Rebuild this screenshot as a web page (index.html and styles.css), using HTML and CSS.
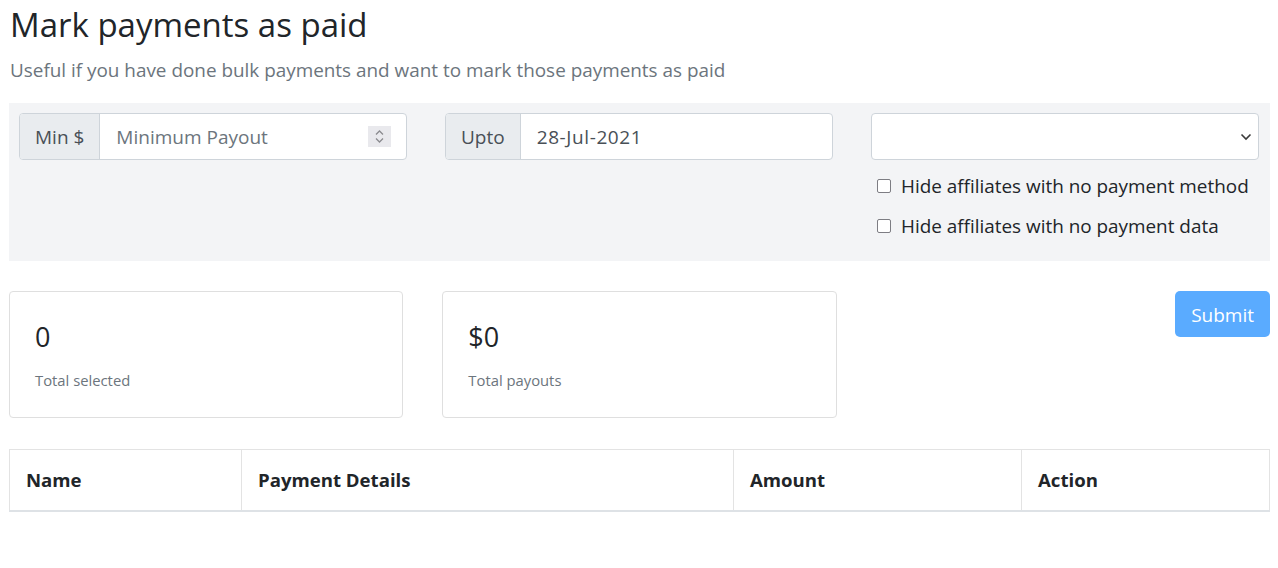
FILE: index.html
```html
<!DOCTYPE html>
<html lang="en">
<head>
<meta charset="utf-8">
<title>Mark payments as paid</title>
<link rel="stylesheet" href="styles.css">
</head>
<body>
<div class="page">
  <h1 class="title">Mark payments as paid</h1>
  <p class="subtitle">Useful if you have done bulk payments and want to mark those payments as paid</p>

  <div class="filters">
    <div class="filter-col">
      <div class="input-group">
        <span class="addon">Min $</span>
        <div class="field">
          <span class="placeholder">Minimum Payout</span>
          <span class="spinner">
            <svg width="11" height="15" viewBox="0 0 11 15"><path d="M2 5.5 L5.5 2 L9 5.5" fill="none" stroke="#8b8b8f" stroke-width="1.3"/><path d="M2 9.5 L5.5 13 L9 9.5" fill="none" stroke="#8b8b8f" stroke-width="1.3"/></svg>
          </span>
        </div>
      </div>
    </div>
    <div class="filter-col">
      <div class="input-group">
        <span class="addon">Upto</span>
        <div class="field"><span class="value">28-Jul-2021</span></div>
      </div>
    </div>
    <div class="filter-col">
      <div class="select">
        <svg width="12" height="8" viewBox="0 0 12 8"><path d="M1.5 1.5 L6 6 L10.5 1.5" fill="none" stroke="#3a3a3a" stroke-width="1.6"/></svg>
      </div>
      <div class="checks">
        <label class="check"><input type="checkbox"><span>Hide affiliates with no payment method</span></label>
        <label class="check"><input type="checkbox"><span>Hide affiliates with no payment data</span></label>
      </div>
    </div>
  </div>

  <div class="summary">
    <div class="card">
      <div class="card-num">0</div>
      <div class="card-label">Total selected</div>
    </div>
    <div class="card">
      <div class="card-num">$0</div>
      <div class="card-label">Total payouts</div>
    </div>
    <div class="actions">
      <button class="btn-submit" disabled>Submit</button>
    </div>
  </div>

  <table class="table">
    <thead>
      <tr>
        <th class="c-name">Name</th>
        <th class="c-details">Payment Details</th>
        <th class="c-amount">Amount</th>
        <th class="c-action">Action</th>
      </tr>
    </thead>
  </table>
</div>
</body>
</html>
```

FILE: styles.css
```css
* { box-sizing: border-box; }

html, body {
  margin: 0;
  padding: 0;
  background: #fff;
}

body {
  font-family: "Open Sans", "Noto Sans", "Liberation Sans", sans-serif;
  color: #212529;
}

.page {
  padding: 0 8px 0 9px;
}

.title {
  margin: 3px 0 0 1px;
  font-size: 33px;
  font-weight: 400;
  line-height: 43px;
  color: #212529;
}

.subtitle {
  margin: 11px 0 0 1px;
  font-size: 18.9px;
  line-height: 27px;
  color: #6c757d;
}

.filters {
  margin-top: 19px;
  background: #f3f4f6;
  padding: 10px 11px 21px 10px;
  display: grid;
  grid-template-columns: repeat(3, 1fr);
  column-gap: 38px;
}

.input-group {
  display: flex;
  height: 47px;
  border: 1px solid #ced4da;
  border-radius: 4px;
  background: #fff;
  overflow: hidden;
}

.addon {
  display: flex;
  align-items: center;
  padding: 0 15px;
  background: #e9ecef;
  border-right: 1px solid #ced4da;
  color: #495057;
  font-size: 19px;
}

.field {
  flex: 1;
  display: flex;
  align-items: center;
  justify-content: space-between;
  padding: 0 15px 0 16px;
  font-size: 19px;
}

.placeholder { color: #6c757d; }
.value { color: #495057; letter-spacing: 0.6px; }

.spinner {
  width: 23px;
  height: 21px;
  background: #e9e9ed;
  display: flex;
  align-items: center;
  justify-content: center;
}

.select {
  height: 47px;
  border: 1px solid #ced4da;
  border-radius: 4px;
  background: #fff;
  display: flex;
  align-items: center;
  justify-content: flex-end;
  padding-right: 6px;
}

.checks {
  margin-top: 12px;
  display: flex;
  flex-direction: column;
  gap: 12px;
}

.check {
  display: flex;
  align-items: center;
  height: 28px;
  font-size: 18.9px;
  color: #212529;
}

.check input {
  appearance: none;
  -webkit-appearance: none;
  width: 14px;
  height: 14px;
  margin: 0 10px 0 6px;
  border: 1.5px solid #7d7d83;
  border-radius: 2px;
  background: #fff;
}

.summary {
  margin-top: 30px;
  display: grid;
  grid-template-columns: repeat(3, 1fr);
  column-gap: 39px;
  align-items: start;
}

.card {
  border: 1px solid #dfdfdf;
  border-radius: 4px;
  padding: 28px 25px 25px;
  height: 127px;
}

.card-num {
  font-size: 27px;
  line-height: 34px;
  color: #212529;
}

.card-label {
  margin-top: 15px;
  font-size: 14.8px;
  line-height: 22px;
  color: #6c757d;
}

.actions {
  display: flex;
  justify-content: flex-end;
}

.btn-submit {
  height: 46px;
  padding: 0 16px;
  border: 0;
  border-radius: 5px;
  background: #5aabff;
  color: #fff;
  font-family: inherit;
  font-size: 19px;
  line-height: 48px;
}

.table {
  margin-top: 31px;
  width: 100%;
  border-collapse: collapse;
  table-layout: fixed;
}

.table th {
  text-align: left;
  font-weight: 700;
  font-size: 18.6px;
  line-height: 30px;
  padding: 15px 16px;
  border: 1px solid #e3e3e3;
  border-bottom: 2px solid #dee2e6;
  color: #212529;
}

.c-name { width: 232px; }
.c-details { width: 492px; }
.c-amount { width: 288px; }
.c-action { width: auto; }
```
